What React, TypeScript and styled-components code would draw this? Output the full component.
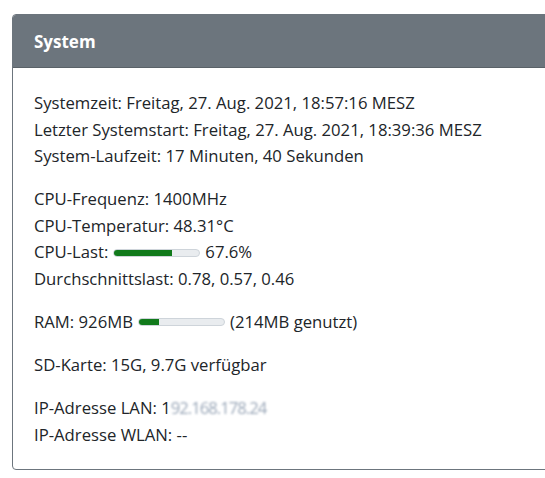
import React from 'react'
import styled, { createGlobalStyle } from 'styled-components'

const GlobalStyle = createGlobalStyle`
  html, body {
    margin: 0;
    padding: 0;
    background: #fff;
    overflow: hidden;
  }
  body {
    font-family: "Open Sans", "Noto Sans", "Liberation Sans", sans-serif;
    color: #212529;
  }
`

const Page = styled.div`
  padding: 14px 0 0 12px;
`

const Card = styled.div`
  width: 560px;
  border: 1px solid #6c757d;
  border-radius: 4px;
  overflow: hidden;
  background: #fff;
`

const CardHeader = styled.div`
  height: 53px;
  box-sizing: border-box;
  display: flex;
  align-items: center;
  padding: 0 21px;
  background: #6c757d;
  border-bottom: 1px solid #5a6268;
  color: #fff;
  font-weight: 700;
  font-size: 17px;
`

const CardBody = styled.div`
  padding: 22px 21px 20px;
`

const Para = styled.p`
  margin: 0 0 16.5px;
  font-size: 16.7px;
  line-height: 26.6px;

  &:last-child {
    margin-bottom: 0;
  }
`

const Line = styled.span`
  display: flex;
  align-items: center;
  gap: 5px;
  white-space: nowrap;
`

const Track = styled.span<{ $width: number }>`
  display: inline-block;
  width: ${(p) => p.$width}px;
  height: 8px;
  box-sizing: border-box;
  border: 1px solid #ced4da;
  border-radius: 5px;
  background: #e9ecef;
  overflow: hidden;
`

const Fill = styled.span`
  display: block;
  height: 100%;
  background: #117a1b;
`

const Redacted = styled.span`
  color: #9aa7b8;
  filter: blur(1.2px);
  letter-spacing: -1px;
`

const Bar: React.FC<{ width: number; value: number }> = ({ width, value }) => (
  <Track $width={width}>
    <Fill style={{ width: `${value}%` }} />
  </Track>
)

export default function App() {
  return (
    <Page>
      <GlobalStyle />
      <Card>
        <CardHeader>System</CardHeader>
        <CardBody>
          <Para>
            <Line>Systemzeit: Freitag, 27. Aug. 2021, 18:57:16 MESZ</Line>
            <Line>Letzter Systemstart: Freitag, 27. Aug. 2021, 18:39:36 MESZ</Line>
            <Line>System-Laufzeit: 17 Minuten, 40 Sekunden</Line>
          </Para>
          <Para>
            <Line>CPU-Frequenz: 1400MHz</Line>
            <Line>CPU-Temperatur: 48.31°C</Line>
            <Line>
              CPU-Last: <Bar width={87} value={67.6} /> 67.6%
            </Line>
            <Line>Durchschnittslast: 0.78, 0.57, 0.46</Line>
          </Para>
          <Para>
            <Line>
              RAM: 926MB <Bar width={87} value={23} /> (214MB genutzt)
            </Line>
          </Para>
          <Para>
            <Line>SD-Karte: 15G, 9.7G verfügbar</Line>
          </Para>
          <Para>
            <Line>
              <span>
                IP-Adresse LAN: 1<Redacted>92.168.178.24</Redacted>
              </span>
            </Line>
            <Line>IP-Adresse WLAN: --</Line>
          </Para>
        </CardBody>
      </Card>
    </Page>
  )
}
